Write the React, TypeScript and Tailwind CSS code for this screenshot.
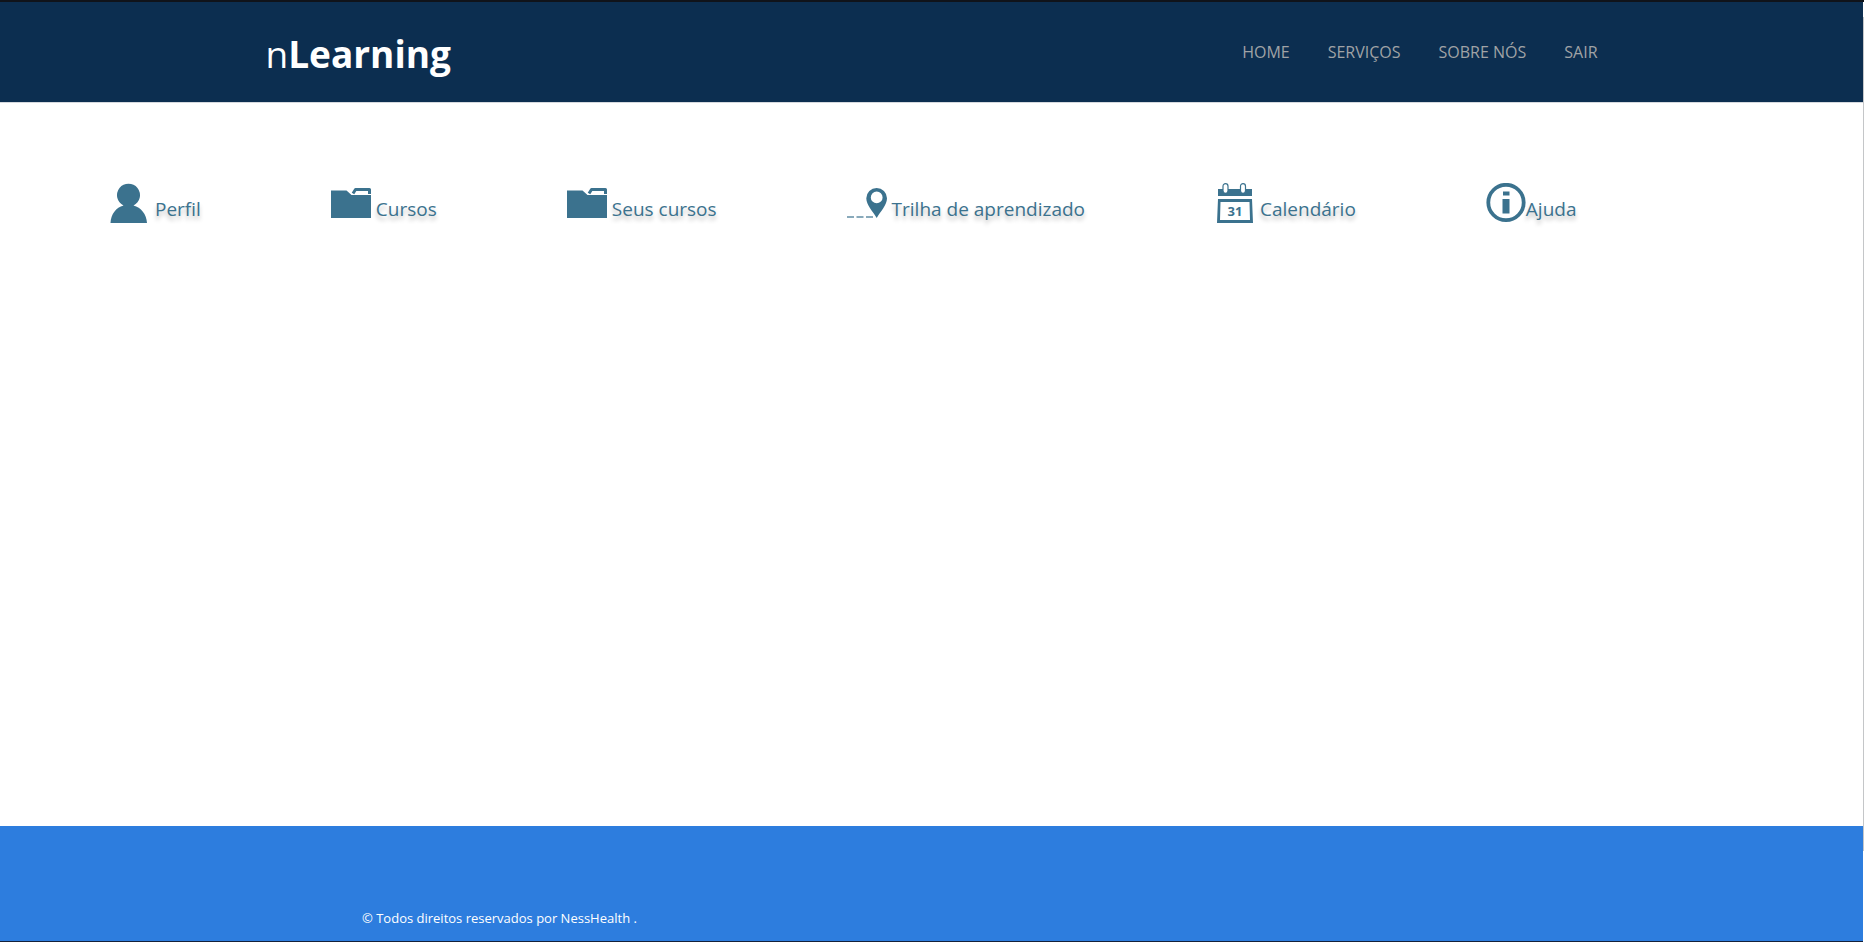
import type { ReactNode } from "react";

const navLinks = ["HOME", "SERVIÇOS", "SOBRE NÓS", "SAIR"];

function UserIcon() {
  return (
    <svg className="h-10 w-10" viewBox="0 0 40 40" fill="currentColor" aria-hidden="true">
      <path d="M0.5 40C1 31 6 24.500 13.500 22.500A11.500 11.500 0 1 1 23.500 22.500C31 24.500 36.500 31 37 40Z" />
    </svg>
  );
}

function FolderIcon() {
  return (
    <svg className="h-10 w-10" viewBox="0 0 40 40" fill="currentColor" aria-hidden="true">
      <path d="M0 7.500H15.500L20.500 12H40V35H0Z" />
      <path d="M22 10.500L24.500 6.500H38.500V11" fill="none" stroke="currentColor" strokeWidth="3" strokeLinejoin="round" />
    </svg>
  );
}

function TrailIcon() {
  return (
    <svg className="h-10 w-10" viewBox="0 0 40 40" fill="currentColor" aria-hidden="true">
      <path
        fillRule="evenodd"
        d="M29.700 35C26 28.500 19.300 22 19.300 15.300A10.350 10.350 0 0 1 40 15.300C40 22 33.500 28.500 29.700 35ZM29.700 8.500A5.900 5.900 0 1 0 29.700 20.300A5.900 5.900 0 1 0 29.700 8.500Z"
      />
      <path d="M0 33.200H7V34.800H0ZM9.500 33.200H16.500V34.800H9.500ZM19 33.200H26V34.800H19Z" opacity="0.8" />
    </svg>
  );
}

function CalendarIcon() {
  return (
    <svg className="h-10 w-10" viewBox="0 0 40 40" fill="currentColor" aria-hidden="true">
      <path d="M3 6H37V13H3Z" />
      <rect x="8" y="0.700" width="5" height="9.600" rx="2.500" fill="white" stroke="currentColor" strokeWidth="1.200" />
      <rect x="25.500" y="0.700" width="5" height="9.600" rx="2.500" fill="white" stroke="currentColor" strokeWidth="1.200" />
      <path fillRule="evenodd" d="M3 16H37L38 40H2ZM5.500 19L5 37H35L34.500 19Z" />
      <text x="20" y="33" textAnchor="middle" className="font-['Open_Sans',sans-serif] text-[13px] font-bold">
        31
      </text>
    </svg>
  );
}

function InfoIcon() {
  return (
    <svg className="h-10 w-10" viewBox="0 0 40 40" fill="currentColor" aria-hidden="true">
      <circle cx="20" cy="19.500" r="17.700" fill="none" stroke="currentColor" strokeWidth="3.800" />
      <path d="M17 8.500H23.500V12.500H17ZM16.500 16H23.500V30.500H16.500Z" />
    </svg>
  );
}

const items: { label: string; icon: ReactNode; space: string }[] = [
  { label: "Perfil", icon: <UserIcon />, space: "gap-[5px]" },
  { label: "Cursos", icon: <FolderIcon />, space: "gap-[5px]" },
  { label: "Seus cursos", icon: <FolderIcon />, space: "gap-[5px]" },
  { label: "Trilha de aprendizado", icon: <TrailIcon />, space: "gap-[5px]" },
  { label: "Calendário", icon: <CalendarIcon />, space: "gap-[5px]" },
  { label: "Ajuda", icon: <InfoIcon />, space: "gap-0" },
];

export default function App() {
  return (
    <div className="flex min-h-screen bg-white font-['Open_Sans','Noto_Sans',sans-serif]">
      <div className="flex min-w-0 flex-1 flex-col">
        <header className="flex h-[103px] items-center justify-between border-t-2 border-b border-t-[#10131a] border-b-[#d5d9de] bg-[#0c2e50] px-[14.25%]">
          <a href="#" className="pt-1 text-[37px] leading-[52px] text-white">
            <span className="font-normal">n</span>
            <span className="font-bold">Learning</span>
          </a>
          <nav className="flex gap-[38px] text-base text-[#a0a3a6]">
            {navLinks.map((label) => (
              <a key={label} href="#">
                {label}
              </a>
            ))}
          </nav>
        </header>

        <main className="flex-1 px-[110px] pt-20">
          <ul className="flex gap-[130px] text-[19px] leading-7 text-[#3b728e]">
            {items.map(({ label, icon, space }) => (
              <li key={label}>
                <a href="#" className={`flex ${space}`}>
                  {icon}
                  <span className="pt-3 whitespace-nowrap [text-shadow:0_4px_4px_rgba(0,0,0,0.25)]">{label}</span>
                </a>
              </li>
            ))}
          </ul>
        </main>

        <footer className="h-[116px] border-b border-[#14213a] bg-[#2d7dde] pt-20 pl-[362px] text-[13px] leading-6 text-white">
          <p>© Todos direitos reservados por NessHealth .</p>
        </footer>
      </div>
      <div className="flex w-px flex-col border-t-2 border-[#10131a] bg-white pt-[15px] pb-[91px]">
        <div className="flex-1 bg-[#c4c6c8]" />
      </div>
    </div>
  );
}
